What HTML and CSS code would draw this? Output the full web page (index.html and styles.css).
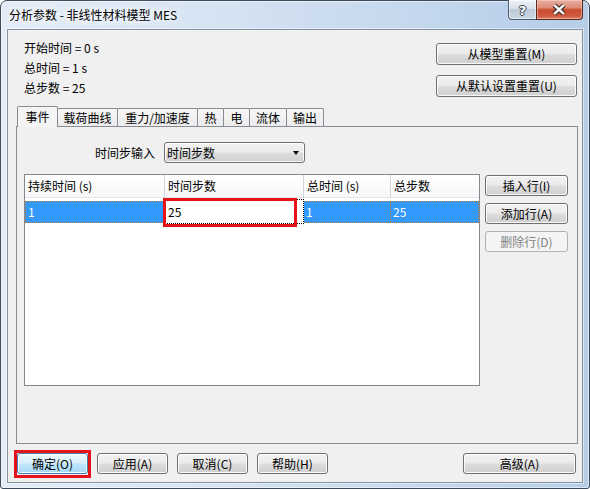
FILE: index.html
```html
<!DOCTYPE html>
<html lang="zh-CN">
<head>
<meta charset="utf-8">
<title>分析参数</title>
<link rel="stylesheet" href="styles.css">
</head>
<body>
<div class="window">
  <div class="titlebar">
    <span class="title">分析参数 - 非线性材料模型 MES</span>
    <div class="caption">
      <div class="cap-btn cap-help"><span class="help-glyph">?</span></div>
      <div class="cap-btn cap-close">
        <svg width="47" height="19" viewBox="0 0 47 19">
          <path d="M18 5 L28 14 M28 5 L18 14" stroke="#3b2a26" stroke-width="5" fill="none"/>
          <path d="M18 5 L28 14 M28 5 L18 14" stroke="#ffffff" stroke-width="2.6" fill="none"/>
        </svg>
      </div>
    </div>
  </div>
  <div class="client">
    <div class="top">
      <div class="info">
        <div>开始时间 = 0 s</div>
        <div>总时间 = 1 s</div>
        <div>总步数 = 25</div>
      </div>
      <div class="reset">
        <div class="btn btn-reset">从模型重置(M)</div>
        <div class="btn btn-reset">从默认设置重置(U)</div>
      </div>
    </div>
    <div class="tabs">
      <div class="tab tab-active t1">事件</div>
      <div class="tab t2">载荷曲线</div>
      <div class="tab t3">重力/加速度</div>
      <div class="tab t4">热</div>
      <div class="tab t5">电</div>
      <div class="tab t6">流体</div>
      <div class="tab t7">输出</div>
    </div>
    <div class="panel">
      <div class="step-row">
        <span class="step-label">时间步输入</span>
        <div class="combo"><span>时间步数</span><span class="arrow"></span></div>
      </div>
      <div class="grid-row">
        <div class="grid">
          <div class="grid-head">
            <div class="hcell">持续时间 (s)</div>
            <div class="hcell">时间步数</div>
            <div class="hcell">总时间 (s)</div>
            <div class="hcell">总步数</div>
          </div>
          <div class="grid-line">
            <div class="cell">1</div>
            <div class="cell editor">25</div>
            <div class="cell">1</div>
            <div class="cell last">25</div>
          </div>
          <div class="annot"></div>
        </div>
        <div class="side">
          <div class="btn btn-side">插入行(I)</div>
          <div class="btn btn-side">添加行(A)</div>
          <div class="btn btn-side btn-disabled">删除行(D)</div>
        </div>
      </div>
    </div>
    <div class="footer">
      <div class="focus-box"><div class="btn btn-foot btn-default">确定(O)</div></div>
      <div class="btn btn-foot">应用(A)</div>
      <div class="btn btn-foot">取消(C)</div>
      <div class="btn btn-foot">帮助(H)</div>
      <div class="btn btn-adv">高级(A)</div>
    </div>
  </div>
</div>
</body>
</html>
```

FILE: styles.css
```css
html, body {
  margin: 0;
  padding: 0;
  background: #ffffff;
}
body {
  font-family: "Noto Sans CJK SC", "Noto Sans", sans-serif;
  font-size: 12px;
  color: #000;
}
.window {
  width: 590px;
  height: 489px;
  box-sizing: border-box;
  border: 1px solid #3d4a5a;
  border-radius: 7px 7px 3px 3px;
  padding: 0 6px 5px 6px;
  display: flex;
  flex-direction: column;
  background: linear-gradient(to right, #e3ecf7 0%, #d4e2f2 40%, #c2d6ec 75%, #b6cde8 100%);
  box-shadow: inset 0 0 0 1px rgba(255, 255, 255, 0.55);
}
.titlebar {
  height: 28px;
  display: flex;
  justify-content: space-between;
  align-items: flex-start;
  flex: none;
}
.title {
  margin-top: 6px;
  margin-left: 2px;
  line-height: 16px;
  color: #000;
  text-shadow: 0 0 6px #ffffff, 0 0 10px #ffffff, 0 0 14px rgba(255, 255, 255, 0.9);
}
.caption {
  display: flex;
  margin-top: -1px;
}
.cap-btn {
  box-sizing: border-box;
  height: 20px;
  border: 1px solid #4e5b6b;
  border-top: none;
  display: flex;
  align-items: center;
  justify-content: center;
}
.cap-help {
  width: 28px;
  border-radius: 0 0 0 4px;
  border-right: none;
  background: linear-gradient(#eef2f7 0%, #d8e1eb 45%, #bfcbd9 50%, #c9d5e2 100%);
  box-shadow: inset 0 0 0 1px rgba(255, 255, 255, 0.5);
}
.help-glyph {
  font-family: "DejaVu Sans", sans-serif;
  font-weight: bold;
  font-size: 13px;
  line-height: 13px;
  color: #ffffff;
  text-shadow: 1px 0 0 #3c4450, -1px 0 0 #3c4450, 0 1px 0 #3c4450, 0 -1px 0 #3c4450;
  margin-top: 1px;
}
.cap-close {
  width: 47px;
  border-radius: 0 0 4px 0;
  border-color: #5a2a22;
  background: linear-gradient(#eab0a2 0%, #de8c78 40%, #c94b30 52%, #cf5a3e 85%, #dd8a6e 100%);
  box-shadow: inset 0 0 0 1px rgba(255, 220, 210, 0.45);
}
.cap-close svg {
  display: block;
}
.client {
  flex: 1;
  border: 1px solid #8391a2;
  background: #f0f0f0;
  padding: 0 4px 0 8px;
  display: flex;
  flex-direction: column;
  box-shadow: 0 0 0 1px rgba(255, 255, 255, 0.5);
}
.top {
  height: 76px;
  display: flex;
  justify-content: space-between;
  flex: none;
}
.info {
  padding: 8px 0 0 8px;
  line-height: 20px;
}
.reset {
  padding-top: 13px;
  margin-right: 1px;
  display: flex;
  flex-direction: column;
  gap: 10px;
}
.btn {
  box-sizing: border-box;
  height: 21px;
  border: 1px solid #707070;
  border-radius: 3px;
  background: linear-gradient(#f2f2f2 0%, #ebebeb 48%, #dddddd 52%, #cfcfcf 100%);
  box-shadow: inset 0 0 0 1px rgba(255, 255, 255, 0.85);
  display: flex;
  align-items: center;
  justify-content: center;
  line-height: 16px;
  white-space: nowrap;
}
.btn-reset {
  width: 141px;
  height: 22px;
}
.tabs {
  height: 21px;
  display: flex;
  align-items: flex-end;
  margin-bottom: -1px;
  padding-left: 1px;
  flex: none;
}
.tab {
  box-sizing: border-box;
  height: 18px;
  margin-bottom: 1px;
  margin-left: -1px;
  border: 1px solid #898c95;
  border-bottom: none;
  border-radius: 2px 2px 0 0;
  text-align: center;
  line-height: 17px;
  background: linear-gradient(#f6f6f6, #ececec);
}
.tab-active {
  height: 21px;
  margin-bottom: 0;
  margin-left: 0;
  line-height: 19px;
  background: #f4f4f4;
  position: relative;
  z-index: 2;
}
.t1 { width: 41px; }
.t2 { width: 61px; }
.t3 { width: 81px; }
.t4 { width: 27px; }
.t5 { width: 27px; }
.t6 { width: 38px; }
.t7 { width: 38px; }
.panel {
  box-sizing: border-box;
  height: 318px;
  border: 1px solid #898c95;
  background: #f0f0f0;
  position: relative;
  z-index: 1;
  padding-top: 15px;
  flex: none;
}
.step-row {
  display: flex;
  align-items: center;
  height: 21px;
  padding-left: 78px;
}
.step-label {
  margin-right: 9px;
  line-height: 16px;
}
.combo {
  box-sizing: border-box;
  width: 141px;
  height: 21px;
  border: 1px solid #707070;
  border-radius: 3px;
  background: linear-gradient(#f2f2f2 0%, #ebebeb 48%, #dddddd 52%, #cfcfcf 100%);
  box-shadow: inset 0 0 0 1px rgba(255, 255, 255, 0.85);
  display: flex;
  align-items: center;
  justify-content: space-between;
  padding: 0 5px 0 2px;
  line-height: 16px;
}
.arrow {
  width: 0;
  height: 0;
  border-left: 3.5px solid transparent;
  border-right: 3.5px solid transparent;
  border-top: 4px solid #000;
  margin-top: 1px;
}
.grid-row {
  display: flex;
  margin-top: 11px;
  padding-left: 7px;
}
.grid {
  box-sizing: border-box;
  width: 456px;
  height: 212px;
  border: 1px solid #828790;
  background: #ffffff;
  position: relative;
}
.grid-head {
  display: grid;
  grid-template-columns: 140px 139px 87px 88px;
  height: 23px;
  background: linear-gradient(#ffffff, #f5f6f7);
}
.hcell {
  border-right: 1px solid #d5d5d5;
  border-bottom: 1px solid #e5e5e5;
  padding-left: 3px;
  line-height: 22px;
  white-space: nowrap;
}
.hcell:last-child {
  border-right: none;
}
.grid-line {
  box-sizing: border-box;
  margin-top: 3px;
  width: 454px;
  height: 22px;
  display: grid;
  grid-template-columns: 139px 139px 87px 87px;
  background: #3399ff;
  border: 1px dotted #b77a3c;
  color: #ffffff;
}
.cell {
  border-right: 1px dotted #b77a3c;
  padding-left: 2px;
  line-height: 20px;
}
.cell.last {
  border-right: none;
}
.cell.editor {
  margin: -3px 0 -2px -1px;
  border: 1px dotted #000;
  background: #ffffff;
  color: #000;
  padding-left: 3px;
  line-height: 23px;
  position: relative;
  z-index: 1;
}
.annot {
  position: absolute;
  left: 138px;
  top: 23px;
  width: 134px;
  height: 29px;
  box-sizing: border-box;
  border: 3px solid #e5141b;
  z-index: 3;
}
.side {
  margin-left: 5px;
  padding-top: 1px;
  display: flex;
  flex-direction: column;
  gap: 7px;
}
.btn-side {
  width: 83px;
}
.btn-disabled {
  border-color: #adb2b5;
  background: #f4f4f4;
  box-shadow: none;
  color: #838383;
}
.footer {
  display: flex;
  align-items: flex-start;
  margin-top: 9px;
  margin-left: -2px;
  gap: 9px;
}
.focus-box {
  border: 3px solid #e5141b;
  padding-bottom: 1px;
  margin-top: -3px;
  margin-right: -3px;
}
.btn-foot {
  width: 71px;
}
.btn-default {
  border-color: #3c7fb1;
  background: linear-gradient(#eaf6fd 0%, #d9f0fc 48%, #bee6fd 52%, #a7d9f5 100%);
}
.btn-adv {
  width: 113px;
  margin-left: auto;
  margin-right: 2px;
}
```
